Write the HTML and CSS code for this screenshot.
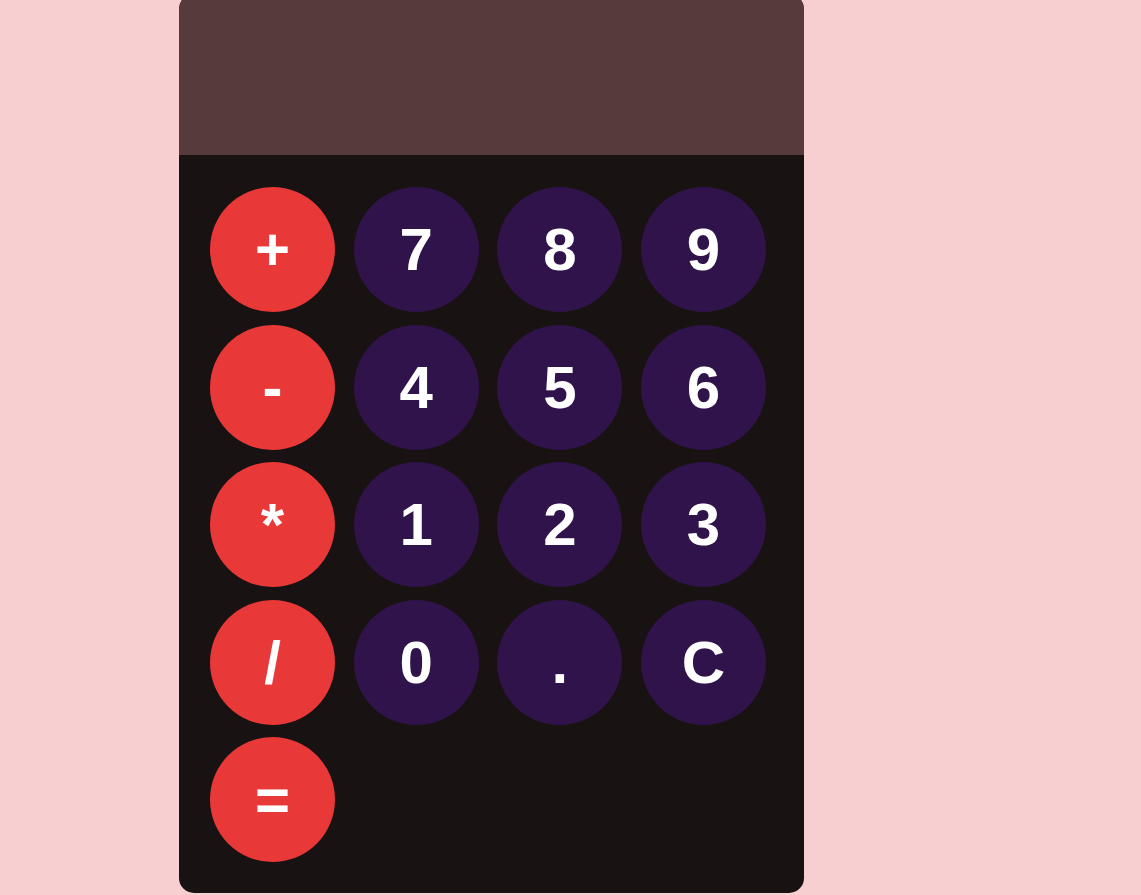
FILE: index.html
```html
<!DOCTYPE html>
<html>
<head>
<meta charset="utf-8">
<link rel="stylesheet" href="styles.css">
</head>
<body>
<div class="calc">
  <div class="display"></div>
  <div class="keys">
    <button class="key op">+</button>
    <button class="key num">7</button>
    <button class="key num">8</button>
    <button class="key num">9</button>
    <button class="key op">-</button>
    <button class="key num">4</button>
    <button class="key num">5</button>
    <button class="key num">6</button>
    <button class="key op">*</button>
    <button class="key num">1</button>
    <button class="key num">2</button>
    <button class="key num">3</button>
    <button class="key op">/</button>
    <button class="key num">0</button>
    <button class="key num">.</button>
    <button class="key num">C</button>
    <button class="key op">=</button>
  </div>
</div>
</body>
</html>
```
FILE: styles.css
```css
html, body {
  margin: 0;
  padding: 0;
}
body {
  background: #f8cfd0;
  height: 895px;
  overflow: hidden;
  font-family: "Liberation Sans", Arial, sans-serif;
}
.calc {
  width: 625px;
  margin: -6px 0 0 179px;
  background: #181312;
  border-radius: 15px;
  overflow: hidden;
}
.display {
  height: 161px;
  background: #573a3b;
}
.keys {
  display: grid;
  grid-template-columns: repeat(4, 125px);
  column-gap: 18.67px;
  row-gap: 12.5px;
  padding: 32px 0 31px 31px;
}
.key {
  width: 125px;
  height: 125px;
  border: none;
  border-radius: 50%;
  color: #fff;
  font-family: "Liberation Sans", Arial, sans-serif;
  font-weight: bold;
  font-size: 60px;
  display: flex;
  align-items: center;
  justify-content: center;
  padding: 0;
}
.op { background: #e83838; }
.num { background: #30134b; }
```
